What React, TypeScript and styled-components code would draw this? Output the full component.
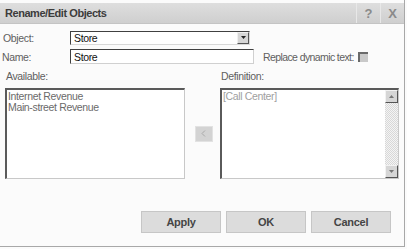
import React, { FC } from 'react';
import styled, { createGlobalStyle } from 'styled-components';

const GlobalStyle = createGlobalStyle`
  html, body {
    margin: 0;
    padding: 0;
    background: #fbfbfb;
  }
  body {
    font-family: 'Liberation Sans', Arial, sans-serif;
    font-size: 10.5px;
    letter-spacing: -0.35px;
    color: #606060;
  }
`;

const Dialog = styled.div`
  width: 405px;
  height: 247px;
  box-sizing: border-box;
  padding-top: 3px;
  border-right: 1px solid #a8a8a8;
  border-bottom: 1px solid #a8a8a8;
  background: #fbfbfb;
  display: flex;
  flex-direction: column;
`;

const TitleBar = styled.div`
  height: 20px;
  display: flex;
  align-items: center;
  background: linear-gradient(#dedede, #cfcfcf);
  border-bottom: 1px solid #c4c4c4;
`;

const Title = styled.div`
  flex: 1;
  padding-left: 5px;
  font-weight: bold;
  font-size: 11px;
  letter-spacing: -0.45px;
  color: #3c3c3c;
`;

const TitleButton = styled.div`
  width: 23px;
  height: 20px;
  display: flex;
  align-items: center;
  justify-content: center;
  border-left: 1px solid #e8e8e8;
  font-weight: bold;
  font-size: 13px;
  letter-spacing: 0;
  color: #8a8a8a;
`;

const Form = styled.div`
  display: flex;
  flex-direction: column;
  gap: 4px;
  padding-top: 6px;
`;

const Row = styled.div`
  display: flex;
  align-items: center;
  height: 15px;
`;

const Label = styled.label<{ $indent?: number }>`
  width: 70px;
  box-sizing: border-box;
  padding-left: ${(p) => p.$indent ?? 3}px;
  color: #606060;
  white-space: nowrap;
`;

const SelectBox = styled.div`
  width: 180px;
  height: 14px;
  box-sizing: border-box;
  display: flex;
  align-items: center;
  border-top: 1px solid #404040;
  border-left: 1px solid #404040;
  border-right: 1px solid #d8d8d8;
  border-bottom: 1px solid #d8d8d8;
  background: #fff;
  color: #111;
`;

const SelectValue = styled.span`
  flex: 1;
  padding-left: 3px;
`;

const DropButton = styled.div`
  width: 12px;
  height: 12px;
  box-sizing: border-box;
  display: flex;
  align-items: center;
  justify-content: center;
  background: #d6d6d6;
  border-top: 1px solid #f0f0f0;
  border-left: 1px solid #f0f0f0;
  border-right: 1px solid #555;
  border-bottom: 1px solid #555;
`;

const TextInput = styled.div`
  width: 184px;
  height: 15px;
  box-sizing: border-box;
  display: flex;
  align-items: center;
  padding-left: 3px;
  border-top: 1px solid #404040;
  border-left: 1px solid #404040;
  border-right: 1px solid #d0d0d0;
  border-bottom: 1px solid #d0d0d0;
  background: #fff;
  color: #111;
`;

const Replace = styled.span`
  margin-left: 9px;
  color: #606060;
  letter-spacing: -0.6px;
  white-space: nowrap;
`;

const Checkbox = styled.span`
  width: 10px;
  height: 10px;
  margin-left: 4px;
  box-sizing: border-box;
  background: #c9c9c9;
  border-top: 2px solid #6a6a6a;
  border-left: 2px solid #6a6a6a;
`;

const Lists = styled.div`
  display: grid;
  grid-template-columns: 185px 35px 179px;
  grid-template-rows: 13px 91px;
  row-gap: 5px;
  margin-top: 6px;
`;

const ListLabel = styled.div<{ $indent: number }>`
  padding-left: ${(p) => p.$indent}px;
  color: #606060;
  line-height: 13px;
`;

const ListBox = styled.div<{ $left: number }>`
  margin-left: ${(p) => p.$left}px;
  box-sizing: border-box;
  display: flex;
  border-top: 2px solid #5a5a5a;
  border-left: 2px solid #5a5a5a;
  border-right: 1px solid #c8c8c8;
  border-bottom: 1px solid #c8c8c8;
  background: #fff;
`;

const Items = styled.div<{ $muted?: boolean }>`
  flex: 1;
  padding: 1px 0 0 1px;
  line-height: 11px;
  color: ${(p) => (p.$muted ? '#a0a0a0' : '#6a6a6a')};
`;

const Middle = styled.div`
  display: flex;
  align-items: center;
  padding-left: 10px;
`;

const MoveButton = styled.div`
  width: 18px;
  height: 16px;
  box-sizing: border-box;
  display: flex;
  align-items: center;
  justify-content: center;
  background: #d3d3d3;
  border: 1px solid #e2e2e2;
`;

const ScrollBar = styled.div`
  width: 13px;
  display: flex;
  flex-direction: column;
  justify-content: space-between;
  background: repeating-conic-gradient(#d8d8d8 0 25%, #f4f4f4 0 50%) 0 0 / 2px 2px;
`;

const ScrollButton = styled.div`
  height: 13px;
  box-sizing: border-box;
  display: flex;
  align-items: center;
  justify-content: center;
  background: #d6d6d6;
  border-top: 1px solid #f2f2f2;
  border-left: 1px solid #f2f2f2;
  border-right: 1px solid #555;
  border-bottom: 1px solid #555;
`;

const Footer = styled.div`
  display: flex;
  justify-content: flex-end;
  gap: 5px;
  padding-right: 13px;
  margin-top: 32px;
`;

const Button = styled.button`
  width: 80px;
  height: 22px;
  margin: 0;
  padding: 0;
  background: #dcdcdc;
  border: 1px solid #c6c6c6;
  font-family: 'Liberation Sans', Arial, sans-serif;
  font-weight: bold;
  font-size: 11px;
  letter-spacing: -0.3px;
  color: #454545;
`;

const Triangle: FC<{ up?: boolean; color?: string }> = ({ up, color = '#222' }) => (
  <svg width="5" height="3" viewBox="0 0 5 3">
    <path d={up ? 'M0 3 L2.5 0 L5 3 Z' : 'M0 0 L5 0 L2.5 3 Z'} fill={color} />
  </svg>
);

const App: FC = () => (
  <>
    <GlobalStyle />
    <Dialog>
      <TitleBar>
        <Title>Rename/Edit Objects</Title>
        <TitleButton>?</TitleButton>
        <TitleButton>X</TitleButton>
      </TitleBar>
      <Form>
        <Row>
          <Label>Object:</Label>
          <SelectBox>
            <SelectValue>Store</SelectValue>
            <DropButton>
              <Triangle />
            </DropButton>
          </SelectBox>
        </Row>
        <Row>
          <Label $indent={2}>Name:</Label>
          <TextInput>Store</TextInput>
          <Replace>Replace dynamic text:</Replace>
          <Checkbox />
        </Row>
      </Form>
      <Lists>
        <ListLabel $indent={6}>Available:</ListLabel>
        <div />
        <ListLabel $indent={1}>Definition:</ListLabel>
        <ListBox $left={5}>
          <Items>
            <div>Internet Revenue</div>
            <div>Main-street Revenue</div>
          </Items>
        </ListBox>
        <Middle>
          <MoveButton>
            <svg width="6" height="7" viewBox="0 0 6 7">
              <path d="M4 0.5 L1 3.5 L4 6.5" stroke="#a8a8a8" strokeWidth="1" fill="none" />
            </svg>
          </MoveButton>
        </Middle>
        <ListBox $left={0}>
          <Items $muted>[Call Center]</Items>
          <ScrollBar>
            <ScrollButton>
              <Triangle up color="#777" />
            </ScrollButton>
            <ScrollButton>
              <Triangle color="#777" />
            </ScrollButton>
          </ScrollBar>
        </ListBox>
      </Lists>
      <Footer>
        <Button>Apply</Button>
        <Button>OK</Button>
        <Button>Cancel</Button>
      </Footer>
    </Dialog>
  </>
);

export default App;
